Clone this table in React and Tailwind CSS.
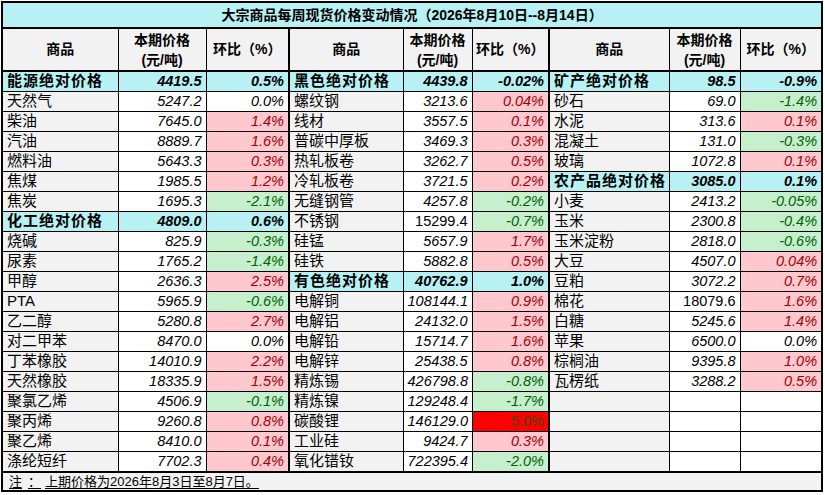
import React from "react";

const P = "p", G = "g", W = "w", R = "r", C = "c";

const left = [
  ["能源绝对价格", "4419.5", "0.5%", C],
  ["天然气", "5247.2", "0.0%", W],
  ["柴油", "7645.0", "1.4%", P],
  ["汽油", "8889.7", "1.6%", P],
  ["燃料油", "5643.3", "0.3%", P],
  ["焦煤", "1985.5", "1.2%", P],
  ["焦炭", "1695.3", "-2.1%", G],
  ["化工绝对价格", "4809.0", "0.6%", C],
  ["烧碱", "825.9", "-0.3%", G],
  ["尿素", "1765.2", "-1.4%", G],
  ["甲醇", "2636.3", "2.5%", P],
  ["PTA", "5965.9", "-0.6%", G],
  ["乙二醇", "5280.8", "2.7%", P],
  ["对二甲苯", "8470.0", "0.0%", W],
  ["丁苯橡胶", "14010.9", "2.2%", P],
  ["天然橡胶", "18335.9", "1.5%", P],
  ["聚氯乙烯", "4506.9", "-0.1%", G],
  ["聚丙烯", "9260.8", "0.8%", P],
  ["聚乙烯", "8410.0", "0.1%", P],
  ["涤纶短纤", "7702.3", "0.4%", P],
];

const mid = [
  ["黑色绝对价格", "4439.8", "-0.02%", C],
  ["螺纹钢", "3213.6", "0.04%", P],
  ["线材", "3557.5", "0.1%", P],
  ["普碳中厚板", "3469.3", "0.3%", P],
  ["热轧板卷", "3262.7", "0.5%", P],
  ["冷轧板卷", "3721.5", "0.2%", P],
  ["无缝钢管", "4257.8", "-0.2%", G],
  ["不锈钢", "15299.4", "-0.7%", G, true],
  ["硅锰", "5657.9", "1.7%", P],
  ["硅铁", "5882.8", "0.5%", P],
  ["有色绝对价格", "40762.9", "1.0%", C],
  ["电解铜", "108144.1", "0.9%", P],
  ["电解铝", "24132.0", "1.5%", P],
  ["电解铅", "15714.7", "1.6%", P],
  ["电解锌", "25438.5", "0.8%", P],
  ["精炼锡", "426798.8", "-0.8%", G],
  ["精炼镍", "129248.4", "-1.7%", G],
  ["碳酸锂", "146129.0", "5.0%", R],
  ["工业硅", "9424.7", "0.3%", P],
  ["氧化镨钕", "722395.4", "-2.0%", G],
];

const right = [
  ["矿产绝对价格", "98.5", "-0.9%", C],
  ["砂石", "69.0", "-1.4%", G],
  ["水泥", "313.6", "0.1%", P],
  ["混凝土", "131.0", "-0.3%", G],
  ["玻璃", "1072.8", "0.1%", P],
  ["农产品绝对价格", "3085.0", "0.1%", C],
  ["小麦", "2413.2", "-0.05%", G],
  ["玉米", "2300.8", "-0.4%", G],
  ["玉米淀粉", "2818.0", "-0.6%", G],
  ["大豆", "4507.0", "0.04%", P],
  ["豆粕", "3072.2", "0.7%", P],
  ["棉花", "18079.6", "1.6%", P, true],
  ["白糖", "5245.6", "1.4%", P],
  ["苹果", "6500.0", "0.0%", W],
  ["棕榈油", "9395.8", "1.0%", P],
  ["瓦楞纸", "3288.2", "0.5%", P],
  ["", "", "", W],
  ["", "", "", W],
  ["", "", "", W],
  ["", "", "", W],
];

const changeCls = {
  p: "bg-[#ffc7ce] text-[#9c0006] italic",
  g: "bg-[#c6efce] text-[#006100] italic",
  w: "bg-white text-black italic",
  r: "bg-[#ff0000] text-[#3f4a00]",
  c: "bg-[#b7f1f3] text-black italic font-bold",
};

function Group({ row, first }) {
  const [name, price, chg, kind, upright] = row;
  const cat = kind === C;
  const sep = first ? "" : "border-l-2";
  return (
    <>
      <td
        className={`${sep} border border-black px-[4px] text-left text-[15px] leading-[18px] whitespace-nowrap overflow-hidden ${
          cat ? "bg-[#b7f1f3] font-bold tracking-[1px]" : "bg-[#f2f2f2]"
        } ${name === "PTA" ? "text-[13px]" : ""}`}
      >
        {name}
      </td>
      <td
        className={`border border-black px-[4px] text-right text-[14.5px] leading-[18px] whitespace-nowrap ${
          cat ? "bg-[#b7f1f3] font-bold italic" : upright ? "bg-white" : "bg-white italic"
        }`}
      >
        {price}
      </td>
      <td
        className={`border border-black px-[4px] text-right text-[14.5px] leading-[18px] whitespace-nowrap ${changeCls[kind]}`}
      >
        {chg}
      </td>
    </>
  );
}

function HeaderCells({ first }) {
  const sep = first ? "" : "border-l-2";
  return (
    <>
      <td className={`${sep} border border-black border-b-2 bg-[#f2f2f2] text-center font-bold text-[14px]`}>
        商品
      </td>
      <td className="border border-black border-b-2 bg-[#f2f2f2] text-center font-bold text-[14px] leading-[20px]">
        本期价格
        <br />
        (元/吨)
      </td>
      <td className="border border-black border-b-2 bg-[#f2f2f2] text-center font-bold text-[14px]">
        环比（%）
      </td>
    </>
  );
}

export default function App() {
  const widths = [115, 88, 83, 114, 69, 77, 120, 71, 81];
  return (
    <div className="w-[825px] h-[495px] bg-white overflow-hidden font-['Liberation_Sans','Noto_Sans_CJK_SC',sans-serif] text-black">
      <div className="ml-[1px] mt-[1px] w-[822px] border-2 border-black">
        <table className="w-[818px] table-fixed border-collapse border-hidden">
          <colgroup>
            {widths.map((w, i) => (
              <col key={i} style={{ width: w }} />
            ))}
          </colgroup>
          <tbody>
            <tr className="h-[25px]">
              <td
                colSpan={9}
                className="border border-black border-b-2 bg-[#b7f1f3] text-center font-bold text-[14px] leading-[20px]"
              >
                大宗商品每周现货价格变动情况（2026年8月10日--8月14日）
              </td>
            </tr>
            <tr className="h-[43px]">
              <HeaderCells first />
              <HeaderCells />
              <HeaderCells />
            </tr>
            {left.map((r, i) => (
              <tr key={i} className="h-[20px]">
                <Group row={r} first />
                <Group row={mid[i]} />
                <Group row={right[i]} />
              </tr>
            ))}
          </tbody>
        </table>
        <div className="h-[19px] border-t-2 border-black bg-[#f2f2f2] pl-[6px] text-[13px] leading-[18px]">
          <span className="underline decoration-1 underline-offset-2">
            注<span className="inline-block w-[6px]"></span>：<span className="inline-block w-[4px]"></span>上期价格为2026年8月3日至8月7日。
          </span>
        </div>
      </div>
    </div>
  );
}
